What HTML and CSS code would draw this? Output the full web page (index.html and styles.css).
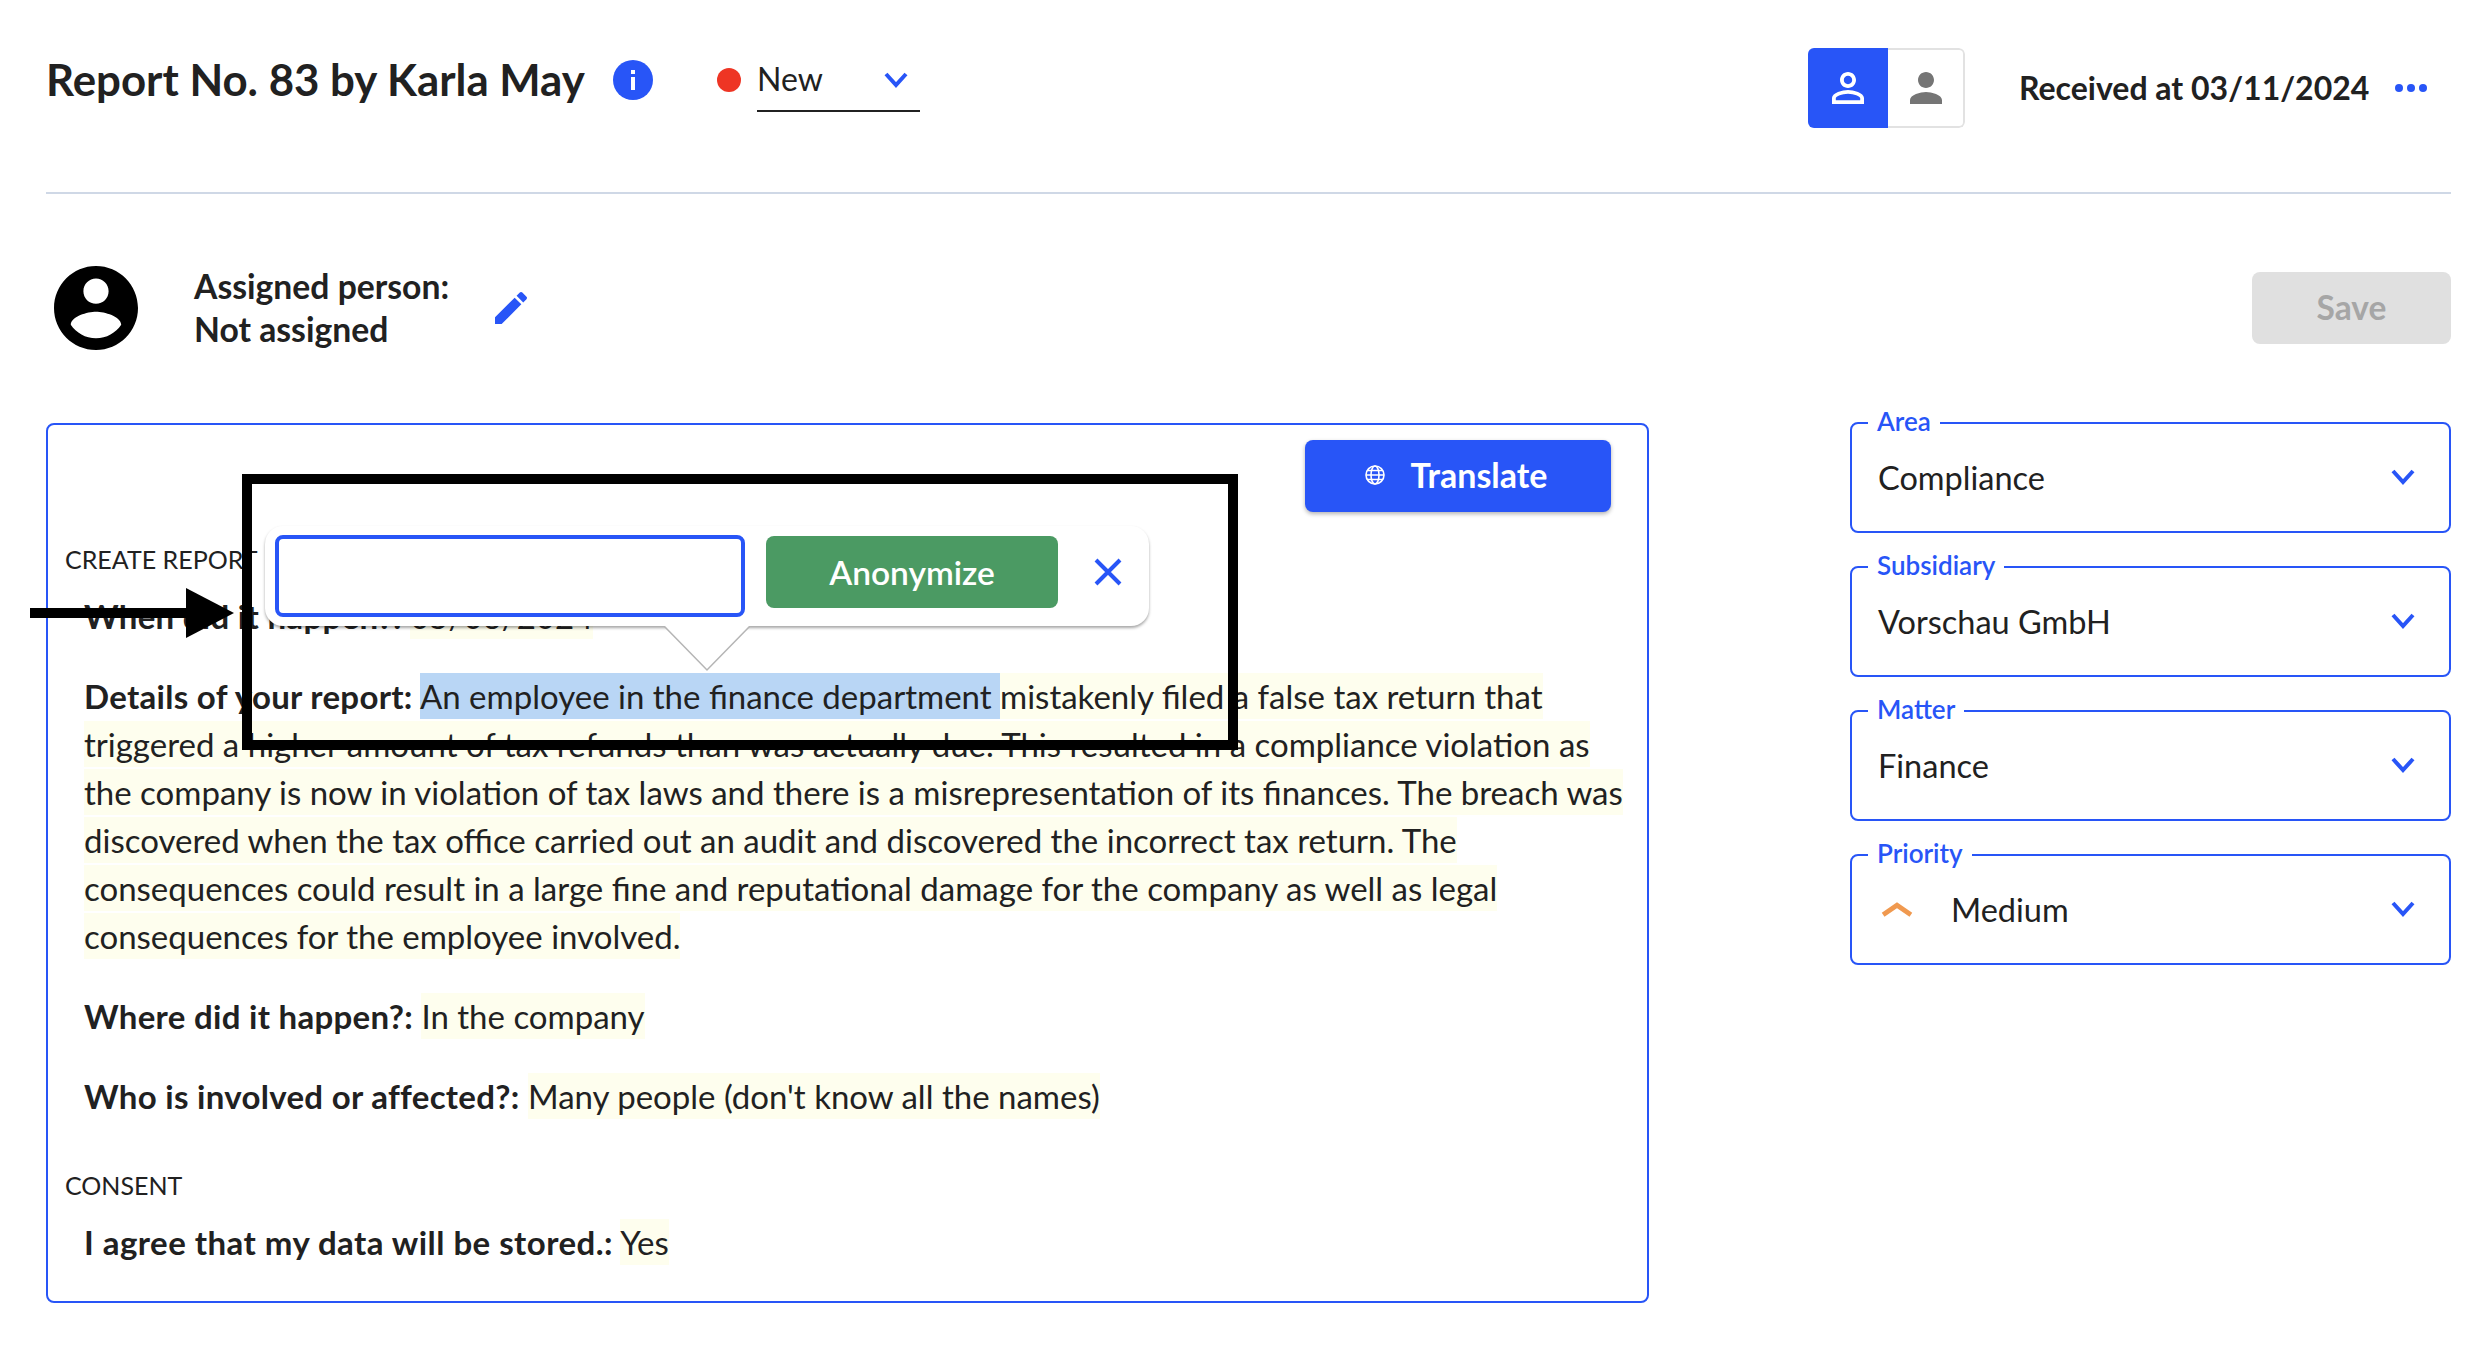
FILE: index.html
```html
<!DOCTYPE html>
<html>
<head>
  <title>Report No. 83</title>
  <link rel="stylesheet" href="styles.css">
</head>
<body>
  <div class="page">
    <header class="top-bar">
      <div class="top-left">
        <h1>Report No. 83 by Karla May</h1>
        <svg class="info-icon" viewBox="0 0 40 40">
          <circle cx="20" cy="20" r="20" fill="#2855f7"/>
          <rect x="18" y="10" width="4" height="4" fill="#fff"/>
          <rect x="18" y="17" width="4" height="13" fill="#fff"/>
        </svg>
        <span class="status-dot"></span>
        <div class="status-select">
          <span class="status-label">New</span>
          <svg class="chevron" viewBox="0 0 24 24"><path d="M2 6l10 11L22 6"/></svg>
        </div>
      </div>
      <div class="top-right">
        <div class="view-toggle">
          <div class="toggle-on">
            <svg viewBox="0 0 24 24"><path d="M12 5.9c1.16 0 2.1.94 2.1 2.1s-.94 2.1-2.1 2.1S9.9 9.16 9.9 8s.94-2.1 2.1-2.1m0 9c2.97 0 6.1 1.46 6.1 2.1v1.1H5.9V17c0-.64 3.13-2.1 6.1-2.1M12 4C9.79 4 8 5.79 8 8s1.79 4 4 4 4-1.79 4-4-1.79-4-4-4zm0 9c-2.67 0-8 1.34-8 4v3h16v-3c0-2.66-5.33-4-8-4z"/></svg>
          </div>
          <div class="toggle-off">
            <svg viewBox="0 0 24 24"><path d="M12 12c2.21 0 4-1.79 4-4s-1.79-4-4-4-4 1.79-4 4 1.79 4 4 4zm0 2c-2.67 0-8 1.34-8 4v2h16v-2c0-2.66-5.33-4-8-4z"/></svg>
          </div>
        </div>
        <span class="received">Received at 03/11/2024</span>
        <svg class="more-icon" viewBox="0 0 32 8">
          <circle cx="4" cy="4" r="4"/><circle cx="16" cy="4" r="4"/><circle cx="28" cy="4" r="4"/>
        </svg>
      </div>
    </header>

    <div class="assign-row">
      <div class="assign-left">
        <svg class="avatar" viewBox="2 2 20 20"><path d="M12 2C6.48 2 2 6.48 2 12s4.48 10 10 10 10-4.48 10-10S17.52 2 12 2zm0 3c1.66 0 3 1.34 3 3s-1.34 3-3 3-3-1.34-3-3 1.34-3 3-3zm0 14.2c-2.5 0-4.71-1.28-6-3.22.03-1.99 4-3.08 6-3.08 1.99 0 5.97 1.09 6 3.08-1.29 1.94-3.5 3.22-6 3.22z"/></svg>
        <div class="assign-text">Assigned person:<br>Not assigned</div>
        <svg class="pencil" viewBox="3 3 18 18"><path d="M3 17.25V21h3.75L17.81 9.94l-3.75-3.75L3 17.25zM20.71 7.04c.39-.39.39-1.02 0-1.41l-2.34-2.34c-.39-.39-1.02-.39-1.41 0l-1.83 1.83 3.75 3.75 1.83-1.83z"/></svg>
      </div>
      <button class="save-btn">Save</button>
    </div>

    <div class="content">
      <section class="report-panel">
        <div class="panel-actions">
          <button class="translate-btn">
            <svg viewBox="0 0 20 20">
              <circle cx="10" cy="10" r="9"/><ellipse cx="10" cy="10" rx="4" ry="9"/>
              <path d="M1 10h18M2.5 5.5h15M2.5 14.5h15"/>
            </svg>
            Translate
          </button>
        </div>

        <div class="section-title first">CREATE REPORT</div>
        <p class="answer when"><b>When did it happen?:</b> <span class="mark">05/06/2024</span></p>
        <p class="answer"><b>Details of your report:</b> <span class="picked">An employee in the finance department </span><span class="mark">mistakenly filed a false tax return that<br>triggered a higher amount of tax refunds than was actually due. This resulted in a compliance violation as<br>the company is now in violation of tax laws and there is a misrepresentation of its finances. The breach was<br>discovered when the tax office carried out an audit and discovered the incorrect tax return. The<br>consequences could result in a large fine and reputational damage for the company as well as legal<br>consequences for the employee involved.</span></p>
        <p class="answer"><b>Where did it happen?:</b> <span class="mark">In the company</span></p>
        <p class="answer"><b>Who is involved or affected?:</b> <span class="mark">Many people (don't know all the names)</span></p>
        <div class="section-title">CONSENT</div>
        <p class="answer consent"><b>I agree that my data will be stored.:</b> <span class="mark">Yes</span></p>

        <div class="anon-popup">
          <input class="anon-input" type="text">
          <button class="anon-btn">Anonymize</button>
          <svg class="anon-close" viewBox="0 0 30 30"><path d="M3 3l24 24M27 3L3 27"/></svg>
          <svg class="anon-tail" viewBox="0 0 88 46"><path d="M1 0l43 44L87 0"/></svg>
        </div>
        <div class="callout-box"></div>
      </section>

      <aside class="side-fields">
        <fieldset class="field">
          <legend>Area</legend>
          <div class="field-row">
            <span class="value">Compliance</span>
            <svg class="chevron" viewBox="0 0 24 24"><path d="M2 6l10 11L22 6"/></svg>
          </div>
        </fieldset>
        <fieldset class="field">
          <legend>Subsidiary</legend>
          <div class="field-row">
            <span class="value">Vorschau GmbH</span>
            <svg class="chevron" viewBox="0 0 24 24"><path d="M2 6l10 11L22 6"/></svg>
          </div>
        </fieldset>
        <fieldset class="field">
          <legend>Matter</legend>
          <div class="field-row">
            <span class="value">Finance</span>
            <svg class="chevron" viewBox="0 0 24 24"><path d="M2 6l10 11L22 6"/></svg>
          </div>
        </fieldset>
        <fieldset class="field">
          <legend>Priority</legend>
          <div class="field-row">
            <svg class="priority-icon" viewBox="0 0 30 14"><path d="M2 12L15 3l13 9"/></svg>
            <span class="value">Medium</span>
            <svg class="chevron" viewBox="0 0 24 24"><path d="M2 6l10 11L22 6"/></svg>
          </div>
        </fieldset>
      </aside>
    </div>
  </div>

  <svg class="pointer-arrow" viewBox="0 0 204 50">
    <rect x="0" y="20" width="160" height="10"/>
    <path d="M156 0l48 25-48 25z"/>
  </svg>
</body>
</html>
```

FILE: styles.css
```css
body {
  font-family: "Lato", "Noto Sans", sans-serif;
  color: #212121;
  background: #fff;
  margin: 0;
  overflow: hidden;
}

.page {
  padding: 0 33px 0 46px;
}

.top-bar {
  display: flex;
  justify-content: space-between;
  height: 192px;
  border-bottom: 2px solid #cfd8e6;
}

.top-left {
  display: flex;
  align-items: center;
  height: 160px;
}

h1 {
  margin: -3px 0 0;
  font-size: 43.8px;
  font-weight: 700;
  width: 567px;
  white-space: nowrap;
}

.info-icon {
  width: 40px;
  height: 40px;
}

.status-dot {
  width: 24px;
  height: 24px;
  border-radius: 50%;
  background: #ee3524;
  margin-left: 64px;
}

.status-select {
  display: flex;
  justify-content: space-between;
  align-items: center;
  box-sizing: border-box;
  width: 163px;
  height: 56px;
  margin: 8px 0 0 16px;
  padding: 0 12px 6px 0;
  border-bottom: 2px solid #212121;
  font-size: 32px;
}

.status-label {
  margin-top: -3px;
}

.chevron {
  width: 24px;
  height: 24px;
  fill: none;
  stroke: #2855f7;
  stroke-width: 4;
}

.top-right {
  display: flex;
  align-items: center;
  height: 176px;
}

.view-toggle {
  display: flex;
  width: 157px;
  height: 80px;
  border-radius: 6px;
  overflow: hidden;
  margin-right: 54px;
}

.view-toggle svg {
  width: 48px;
  height: 48px;
}

.toggle-on {
  display: flex;
  align-items: center;
  justify-content: center;
  width: 80px;
  background: #2855f7;
  fill: #fff;
}

.toggle-off {
  display: flex;
  align-items: center;
  justify-content: center;
  flex: 1;
  border: 2px solid #e2e2e2;
  border-left: none;
  border-radius: 0 6px 6px 0;
  fill: #757575;
}

.received {
  font-size: 32px;
  font-weight: 700;
  width: 376px;
  margin-top: -2px;
  white-space: nowrap;
}

.more-icon {
  width: 32px;
  height: 8px;
  fill: #2855f7;
  margin-right: 24px;
}

.assign-row {
  display: flex;
  justify-content: space-between;
  align-items: center;
  height: 72px;
  margin-top: 78px;
}

.assign-left {
  display: flex;
  align-items: center;
}

.avatar {
  width: 84px;
  height: 84px;
  margin-left: 8px;
}

.assign-text {
  font-size: 33.7px;
  font-weight: 700;
  line-height: 43px;
  margin: -1px 0 0 56px;
  width: 301px;
}

.pencil {
  width: 32px;
  height: 32px;
  fill: #2855f7;
}

.save-btn {
  width: 199px;
  height: 72px;
  padding-bottom: 3px;
  border: none;
  border-radius: 8px;
  background: #e0e0e0;
  color: #a6a6a6;
  font-family: inherit;
  font-size: 33.5px;
  font-weight: 700;
}

.content {
  display: flex;
  justify-content: space-between;
  margin-top: 79px;
}

.report-panel {
  position: relative;
  box-sizing: border-box;
  width: 1603px;
  height: 880px;
  border: 2px solid #2855f7;
  border-radius: 8px;
  padding: 15px 36px 0 17px;
}

.panel-actions {
  display: flex;
  justify-content: flex-end;
}

.translate-btn {
  display: flex;
  align-items: center;
  justify-content: center;
  gap: 26px;
  width: 306px;
  height: 72px;
  padding: 0 4px 3px 0;
  border: none;
  border-radius: 8px;
  background: #2855f7;
  color: #fff;
  font-family: inherit;
  font-size: 34px;
  font-weight: 700;
  box-shadow: 0 2px 4px rgba(0,0,0,0.3);
}

.translate-btn svg {
  width: 20px;
  height: 20px;
  fill: none;
  stroke: #fff;
  stroke-width: 1.6;
}

.section-title {
  font-size: 25px;
  line-height: 30px;
  margin-top: 50px;
}

.section-title.first {
  margin-top: 32px;
}

.answer {
  font-size: 33px;
  line-height: 48px;
  margin: 32px 0 0 19px;
  white-space: nowrap;
}

.answer.when {
  margin-top: 18px;
}

.answer.consent {
  margin-top: 18px;
}

.answer.consent b {
  letter-spacing: 0.46px;
}

.answer b {
  font-weight: 700;
  letter-spacing: 0.3px;
}

.mark {
  background: #fefeee;
  padding: 3px 0;
}

.picked {
  background: #b9d6f5;
  padding: 3px 0;
}

.anon-popup {
  position: absolute;
  left: 217px;
  top: 101px;
  display: flex;
  align-items: center;
  box-sizing: border-box;
  width: 884px;
  height: 100px;
  padding: 0 10px;
  border-radius: 18px;
  background: #fff;
  box-shadow: 0 2px 3px rgba(0,0,0,0.35);
}

.anon-input {
  box-sizing: border-box;
  width: 470px;
  height: 82px;
  border: 4px solid #2855f7;
  border-radius: 8px;
  outline: none;
}

.anon-btn {
  width: 292px;
  height: 72px;
  margin: 0 0 8px 21px;
  padding-bottom: 2px;
  border: none;
  border-radius: 8px;
  background: #4b9a63;
  color: #fff;
  font-family: inherit;
  font-size: 33.5px;
  font-weight: 600;
}

.anon-close {
  width: 30px;
  height: 30px;
  margin: 0 0 8px 35px;
  fill: none;
  stroke: #2855f7;
  stroke-width: 4;
}

.anon-tail {
  position: absolute;
  left: 398px;
  top: 100px;
  width: 88px;
  height: 46px;
  fill: #fff;
  stroke: #b5b5b5;
  stroke-width: 1.5;
}

.callout-box {
  position: absolute;
  left: 194px;
  top: 49px;
  box-sizing: border-box;
  width: 996px;
  height: 276px;
  border: 10px solid #000;
}

.pointer-arrow {
  position: absolute;
  left: 30px;
  top: 588px;
  width: 204px;
  height: 50px;
}

.side-fields {
  display: flex;
  flex-direction: column;
  gap: 23px;
  width: 601px;
  margin-top: -11px;
}

.field {
  box-sizing: border-box;
  height: 121px;
  min-inline-size: 0;
  margin: 0;
  padding: 0;
  border: 2px solid #2855f7;
  border-radius: 8px;
}

.field legend {
  margin-left: 16px;
  padding: 0 9px 3px;
  color: #2855f7;
  font-size: 26px;
  font-weight: 600;
  line-height: 19px;
}

.field-row {
  display: flex;
  align-items: center;
  height: 86px;
  padding: 0 34px 0 26px;
}

.value {
  flex: 1;
  font-size: 32.5px;
}

.priority-icon {
  width: 32px;
  height: 15px;
  margin: 0 38px 0 3px;
  fill: none;
  stroke: #f0994f;
  stroke-width: 4.5;
}
```
